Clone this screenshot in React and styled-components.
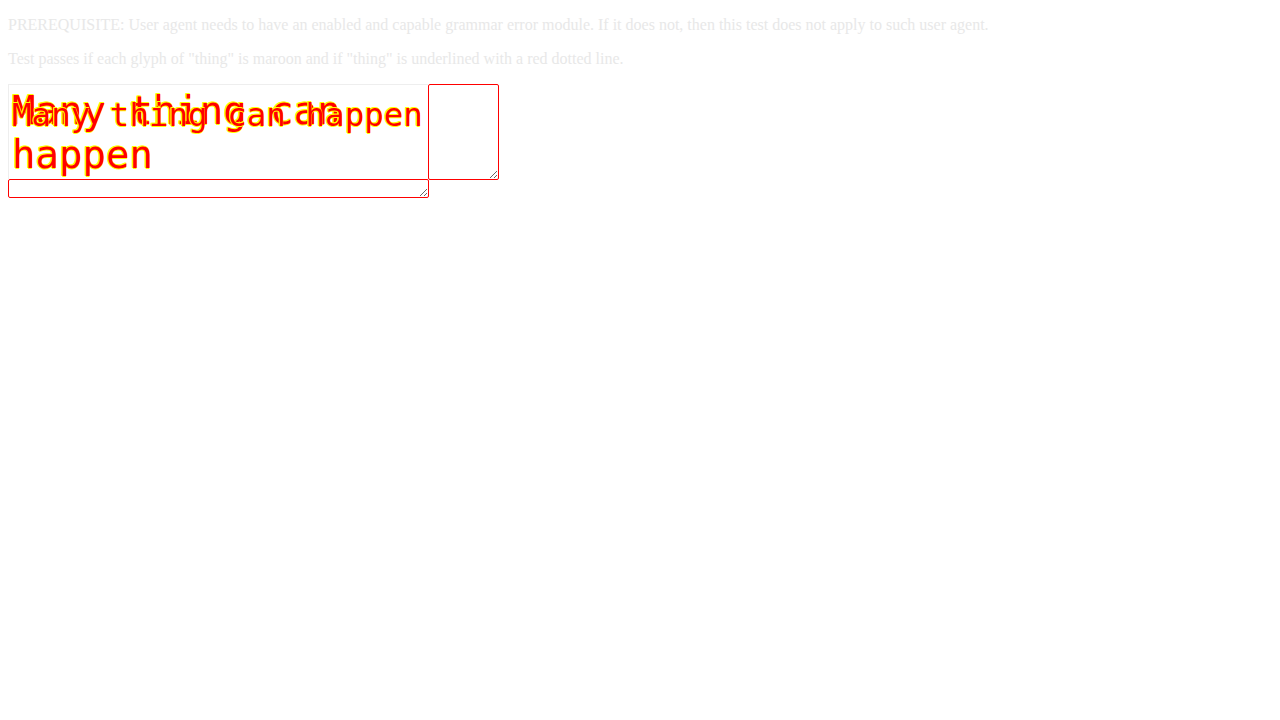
import React from "react";
import styled, { createGlobalStyle } from "styled-components";

const Global = createGlobalStyle`
  html, body {
    margin: 0;
    padding: 0;
  }
  body {
    font-family: "Liberation Serif", "Times New Roman", serif;
    font-size: 16px;
    color: #e8e8e8;
    background: #fff;
  }
`;

const Page = styled.div`
  padding: 0 8px;
  display: flow-root;
`;

const Para = styled.p`
  margin: 16px 0;
  line-height: 18px;
`;

const Editor = styled.div`
  display: flex;
  flex-direction: column;
  align-items: flex-start;
`;

const TopRow = styled.div`
  display: flex;
  align-items: flex-start;
`;

const TextBox = styled.div`
  position: relative;
  box-sizing: border-box;
  width: 420px;
  height: 95px;
  border-top: 1px solid #eeeeee;
  border-left: 1px solid #eeeeee;
  overflow: visible;
  font-family: "DejaVu Sans Mono", monospace;
  color: #ff0000;
  text-shadow: -1px 0 #ffff00, 0 -1px #ffff00, -1px -1px #ffff00, 0 1px #ffff00;
`;

const BigText = styled.div`
  padding: 4px 0 0 3px;
  font-size: 39px;
  line-height: 44px;
  white-space: normal;
`;

const OverText = styled.div`
  position: absolute;
  left: 3px;
  top: 12px;
  font-size: 32.5px;
  line-height: 37px;
  white-space: nowrap;
`;

const Area = styled.textarea`
  box-sizing: border-box;
  margin: 0;
  padding: 0;
  border: 1px solid #ff0000;
  border-radius: 2px;
  background: transparent;
  outline: none;
  width: ${(p) => p.$w}px;
  height: ${(p) => p.$h}px;
  margin-top: ${(p) => p.$mt || 0}px;
  display: block;
`;

export default function App() {
  return (
    <Page>
      <Global />
      <Para>
        PREREQUISITE: User agent needs to have an enabled and capable grammar error module. If it does not, then this test does not apply to such user agent.
      </Para>
      <Para>
        Test passes if each glyph of "thing" is maroon and if "thing" is underlined with a red dotted line.
      </Para>
      <Editor>
        <TopRow>
          <TextBox>
            <BigText>Many thing can happen</BigText>
            <OverText>Many thing can happen</OverText>
          </TextBox>
          <Area $w={71} $h={96} />
        </TopRow>
        <Area $w={421} $h={19} $mt={-1} />
      </Editor>
    </Page>
  );
}
